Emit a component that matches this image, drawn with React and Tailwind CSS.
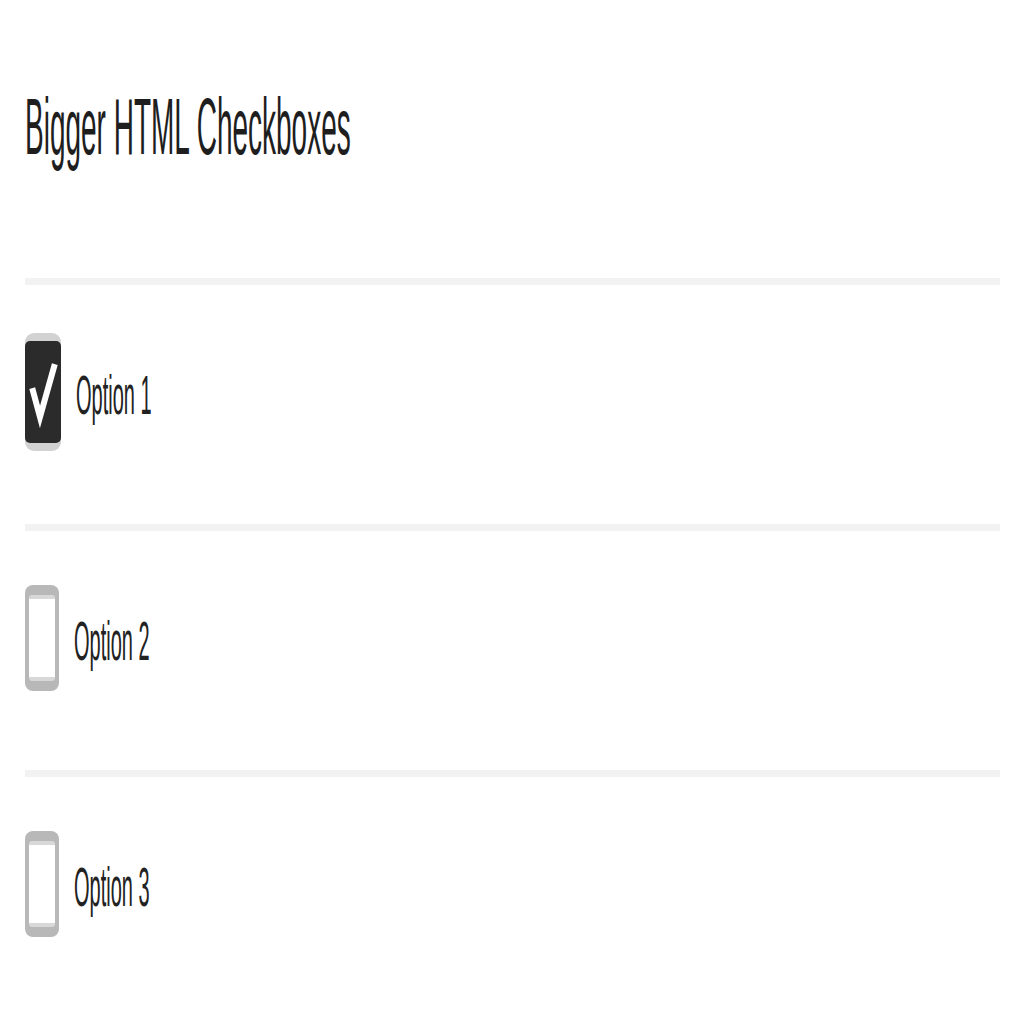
import React from 'react'

const options = [
  { label: 'Option 1', checked: true },
  { label: 'Option 2', checked: false },
  { label: 'Option 3', checked: false },
]

function Box({ checked }) {
  if (checked) {
    return (
      <div className="w-[36px] h-[118px] rounded-[9px] bg-[#d2d2d2] py-[8px] shrink-0">
        <div className="w-full h-full rounded-[5px] bg-[#2b2b2b] flex items-center justify-center">
          <svg width="36" height="102" viewBox="0 0 36 102" preserveAspectRatio="none">
            <path d="M8 50 L15 76 L29 26" fill="none" stroke="#fff" strokeWidth="6" strokeLinecap="square" strokeLinejoin="miter" />
          </svg>
        </div>
      </div>
    )
  }
  return (
    <div className="w-[34px] h-[106px] rounded-[8px] bg-[#b8b8b8] px-[4px] py-[10px] shrink-0">
      <div className="w-full h-full rounded-[3px] bg-white border-y-[4px] border-[#d8d8d8]" />
    </div>
  )
}

function App() {
  return (
    <div className="w-[1024px] h-[1024px] bg-white px-[25px]" style={{ fontFamily: '"Liberation Sans", Arial, sans-serif' }}>
      <div className="h-[278px] pt-[114px]">
        <h1 className="text-[28px] leading-[28px] font-normal text-[#1e1e1e] scale-y-[2.85] origin-center w-fit">
          Bigger HTML Checkboxes
        </h1>
      </div>

      {options.map((opt) => (
        <div key={opt.label}>
          <div className="h-[7px] bg-[#f2f2f2] w-[975px]" />
          <div className="h-[239px] pb-[25px] flex items-center gap-[15px]">
            <Box checked={opt.checked} />
            <span className="text-[20px] leading-[20px] text-[#222] scale-y-[2.8] mt-[4px]">
              {opt.label}
            </span>
          </div>
        </div>
      ))}
    </div>
  )
}

export default App
